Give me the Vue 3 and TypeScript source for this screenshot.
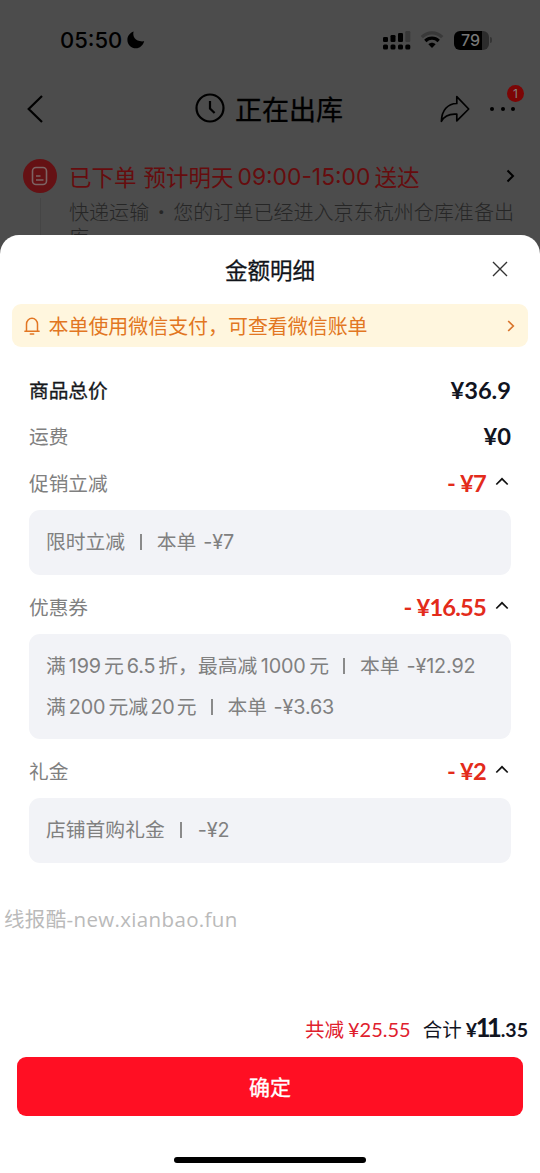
<script setup lang="ts">
interface Part {
  text: string
  kind: 'han' | 'num' | 'bar'
  // space before the part, in pixels
  gap?: number
}

interface Discount {
  label: string
  amount: string
  lines: Part[][]
}

const discounts: Discount[] = [
  {
    label: '促销立减',
    amount: '¥7',
    lines: [
      [
        { text: '限时立减', kind: 'han' },
        { text: '', kind: 'bar', gap: 15 },
        { text: '本单', kind: 'han', gap: 15 },
        { text: '-¥7', kind: 'num', gap: 7 },
      ],
    ],
  },
  {
    label: '优惠券',
    amount: '¥16.55',
    lines: [
      [
        { text: '满', kind: 'han' },
        { text: '199', kind: 'num', gap: 3 },
        { text: '元', kind: 'han', gap: 3 },
        { text: '6.5', kind: 'num', gap: 3 },
        { text: '折，最高减', kind: 'han', gap: 3 },
        { text: '1000', kind: 'num', gap: 3.5 },
        { text: '元', kind: 'han', gap: 3.5 },
        { text: '', kind: 'bar', gap: 14.5 },
        { text: '本单', kind: 'han', gap: 15 },
        { text: '-¥12.92', kind: 'num', gap: 7 },
      ],
      [
        { text: '满', kind: 'han' },
        { text: '200', kind: 'num', gap: 3 },
        { text: '元减', kind: 'han', gap: 3 },
        { text: '20', kind: 'num', gap: 2.5 },
        { text: '元', kind: 'han', gap: 2 },
        { text: '', kind: 'bar', gap: 14.5 },
        { text: '本单', kind: 'han', gap: 15 },
        { text: '-¥3.63', kind: 'num', gap: 6.5 },
      ],
    ],
  },
  {
    label: '礼金',
    amount: '¥2',
    lines: [
      [
        { text: '店铺首购礼金', kind: 'han' },
        { text: '', kind: 'bar', gap: 15.5 },
        { text: '-¥2', kind: 'num', gap: 16 },
      ],
    ],
  },
]
</script>

<template>
  <div class="screen">
    <div class="backdrop">
      <div class="status">
        <span class="clock">05:50</span>
        <svg class="moon" width="18" height="18" viewBox="0 0 18 18">
          <path d="M6.600.600C5.100 5.600 8.800 11.400 17.200 10.300 15.900 14.600 12.800 17.300 9 17.300 4.300 17.300.400 13.600.400 8.900.400 5 3 1.900 6.600.600z" />
        </svg>
        <svg class="signal" width="28" height="19" viewBox="0 0 28 19">
          <g>
            <rect x="0" y="6" width="5" height="5" rx="1.300" />
            <rect x="7.500" y="4" width="5" height="7" rx="1.300" />
            <rect x="15" y="2" width="5" height="9" rx="1.300" />
            <rect x="22.300" y="0" width="5" height="11" rx="1.300" fill="#393939" />
            <rect x="0" y="13.500" width="5" height="5" rx="1.500" />
            <rect x="7.500" y="13.500" width="5" height="5" rx="1.500" />
            <rect x="15" y="13.500" width="5" height="5" rx="1.500" />
            <rect x="22.300" y="13.500" width="5" height="5" rx="1.500" />
          </g>
        </svg>
        <svg class="wifi" width="24" height="18" viewBox="0 0 24 18" fill="none">
          <path d="M1.800 6.200C7.600.4 16.400.4 22.200 6.200" stroke="#393939" stroke-width="3.200" />
          <path d="M5.300 10C9.200 6.200 14.800 6.200 18.700 10" stroke="#000" stroke-width="3.200" />
          <path d="M8.400 13.200C10.500 11.200 13.500 11.200 15.600 13.200L12 17z" fill="#000" />
        </svg>
        <div class="battery"><span>79</span></div>
        <i class="battery-tip"></i>
      </div>

      <div class="nav">
        <svg class="back" width="18" height="30" viewBox="0 0 18 30" fill="none" stroke="#000" stroke-width="2.200">
          <path d="M16 2 2.700 15 16 28" />
        </svg>
        <div class="nav-title">
          <svg width="30" height="30" viewBox="0 0 30 30" fill="none" stroke="#000" stroke-width="2.200">
            <circle cx="15" cy="15" r="13.500" />
            <path d="M15 8V15.500L19.600 20" />
          </svg>
          <span>正在出库</span>
        </div>
        <svg class="share" width="30" height="28" viewBox="0 0 30 28" fill="none" stroke="#000" stroke-width="1.700" stroke-linejoin="round">
          <path d="M16.800 1.700 28.700 14 16.800 25.800V19.200C9.500 18.600 4.500 20.500 1.400 26.300 1.600 15.200 7.800 8.600 16.800 8.500z" />
        </svg>
        <div class="more">
          <i></i><i></i><i></i>
          <b class="badge">1</b>
        </div>
      </div>

      <div class="order">
        <div class="rail">
          <div class="dot">
            <svg width="18" height="20" viewBox="0 0 18 20" fill="none" stroke="#7c6464" stroke-width="1.600">
              <rect x="1.500" y="1.500" width="14" height="17" rx="3.500" />
              <path d="M5 10H9.500M5 14H12.500" />
            </svg>
          </div>
          <div class="track"></div>
        </div>
        <div class="order-body">
          <div class="order-title">
            <span>已下单</span><span class="g1">预计明天</span><em>09:00-15:00</em><span>送达</span>
            <svg width="9" height="14" viewBox="0 0 9 14" fill="none" stroke="#000" stroke-width="2">
              <path d="M1.500 1.500 7 7 1.500 12.500" />
            </svg>
          </div>
          <div class="order-text">快递运输<span class="mid">·</span>您的订单已经进入京东杭州仓库准备出库</div>
        </div>
      </div>
    </div>

    <section class="sheet">
      <header class="sheet-head">
        <h1>金额明细</h1>
        <svg class="close" width="16" height="16" viewBox="0 0 16 16" fill="none" stroke="#333" stroke-width="1.400">
          <path d="M1 1 15 15M15 1 1 15" />
        </svg>
      </header>

      <div class="notice">
        <svg width="16" height="18" viewBox="0 0 16 18" fill="none" stroke="#e27622" stroke-width="1.500" stroke-linecap="round" stroke-linejoin="round">
          <path d="M2.500 14V7A5.500 5.800 0 0 1 13.500 7V14M.9 14.200H15.100M6.300 17H9.700" />
        </svg>
        <span>本单使用微信支付，可查看微信账单</span>
        <svg class="arrow" width="8" height="12" viewBox="0 0 8 12" fill="none" stroke="#d9752c" stroke-width="1.700">
          <path d="M1.200 1 6.300 6 1.200 11" />
        </svg>
      </div>

      <div class="details">
        <div class="row first">
          <span class="label strong">商品总价</span>
          <span class="price">¥36.9</span>
        </div>
        <div class="row">
          <span class="label">运费</span>
          <span class="price">¥0</span>
        </div>
        <template v-for="d in discounts" :key="d.label">
          <div class="row">
            <span class="label">{{ d.label }}</span>
            <span class="price off"><i>-</i>{{ d.amount }}</span>
            <svg class="fold" width="14" height="9" viewBox="0 0 14 9" fill="none" stroke="#111" stroke-width="1.700">
              <path d="M1.300 7.500 7 1.800 12.700 7.500" />
            </svg>
          </div>
          <div class="box">
            <p v-for="(line, n) in d.lines" :key="n">
              <span
                v-for="(part, k) in line"
                :key="k"
                :class="part.kind"
                :style="{ marginLeft: (part.gap ?? 0) + 'px' }"
              >{{ part.text }}</span>
            </p>
          </div>
        </template>
      </div>

      <div class="watermark"><span>线报酷</span>-new.xianbao.fun</div>

      <footer>
        <div class="totals">
          <span class="saved">共减<b>¥25.55</b></span>
          <span class="sum">合计<b>¥<big>11</big>.35</b></span>
        </div>
        <button type="button">确定</button>
        <div class="home"></div>
      </footer>
    </section>
  </div>
</template>

<style>
html,
body {
  margin: 0;
  background: #4c4c4c;
}
</style>

<style scoped>
* {
  box-sizing: border-box;
}
svg {
  display: block;
  flex: none;
}
i,
em {
  font-style: normal;
}
.screen {
  width: 540px;
  height: 1173px;
  overflow: hidden;
  display: flex;
  flex-direction: column;
  background: #4c4c4c;
  font-family: Inter, 'Noto Sans CJK SC', sans-serif;
  white-space: nowrap;
}
.backdrop {
  height: 235px;
  flex: none;
}
.status {
  height: 80px;
  padding-left: 60px;
  display: flex;
  align-items: center;
}
.clock {
  width: 62px;
  font: 500 22px/26px Inter, sans-serif;
}
.moon {
  margin-left: 5px;
}
.signal {
  margin-left: 238px;
}
.wifi {
  margin-left: 9px;
}
.battery {
  margin-left: 10px;
  width: 35px;
  height: 19px;
  border-radius: 6px;
  background: linear-gradient(90deg, #000 28px, #2c2c2c 28px);
  color: #777;
  font: 500 16px/19px Inter, sans-serif;
  padding-left: 7px;
}
.battery-tip {
  width: 2px;
  height: 6px;
  margin-left: 1px;
  border-radius: 0 2px 2px 0;
  background: #343434;
}
.nav {
  height: 58px;
  display: flex;
  align-items: center;
}
.back {
  margin-left: 26px;
}
.nav-title {
  display: flex;
  align-items: center;
  gap: 10px;
  margin-left: 151px;
  width: 245px;
  font: 400 27px/40px 'Noto Sans CJK SC', sans-serif;
  -webkit-text-stroke: 0.3px #000;
}
.nav-title svg {
  margin-bottom: 2px;
}
.more {
  position: relative;
  display: flex;
  gap: 6.500px;
  margin-left: 20px;
}
.more i {
  width: 4px;
  height: 4px;
  border-radius: 50%;
  background: #000;
}
.badge {
  position: absolute;
  left: 17px;
  top: -22px;
  width: 17px;
  height: 17px;
  border-radius: 50%;
  background: #7c0505;
  color: #828282;
  font: 400 12px/17px Inter, sans-serif;
  text-align: center;
}
.order {
  display: flex;
  padding-left: 23px;
  height: 97px;
  overflow: hidden;
}
.rail {
  width: 34px;
  padding-top: 21px;
  display: flex;
  flex-direction: column;
  align-items: center;
}
.dot {
  width: 34px;
  height: 34px;
  flex: none;
  border-radius: 50%;
  background: #651114;
  display: flex;
  align-items: center;
  justify-content: center;
}
.track {
  width: 1px;
  flex: 1;
  margin-top: 5px;
  background: #454545;
}
.order-body {
  padding-left: 12px;
}
.order-title {
  display: flex;
  align-items: center;
  height: 32px;
  margin-top: 22px;
  font: 400 22.500px/32px 'Noto Sans CJK SC', sans-serif;
  color: #660c0e;
}
.order-title > span {
  margin-bottom: 1px;
}
.order-title .g1 {
  margin-left: 7px;
}
.order-title em {
  font: 400 22.800px/32px Inter, sans-serif;
  width: 137px;
  margin-left: 4px;
  padding-top: 1px;
}
.order-title svg {
  margin-left: 86px;
}
.order-text {
  width: 450px;
  margin-top: 7px;
  font: 300 20.060px/25px 'Noto Sans CJK SC', sans-serif;
  color: #262626;
  white-space: normal;
  line-break: anywhere;
}
.mid {
  display: inline-block;
  width: 24px;
  text-align: center;
}
.sheet {
  height: 938px;
  border-radius: 19px 19px 0 0;
  background: #fff;
  display: flex;
  flex-direction: column;
}
.sheet-head {
  height: 69px;
  display: grid;
  grid-template-columns: 1fr auto 1fr;
  align-items: center;
  padding-bottom: 1px;
}
h1 {
  grid-column: 2;
  margin: 0 0 1px;
  font: 400 22.500px/34px 'Noto Sans CJK SC', sans-serif;
  -webkit-text-stroke: 0.3px #11141a;
  color: #11141a;
}
.close {
  justify-self: end;
  margin-right: 32px;
}
.notice {
  height: 43px;
  flex: none;
  margin: 0 12px;
  padding: 0 13px 0 12px;
  border-radius: 9px;
  background: #fff6de;
  display: flex;
  align-items: center;
  font: 400 19.950px/30px 'Noto Sans CJK SC', sans-serif;
  color: #e27622;
}
.notice span {
  margin-left: 8.500px;
}
.arrow {
  margin-left: auto;
}
.details {
  padding: 20px 29px 0;
}
.row {
  height: 47px;
  display: flex;
  align-items: center;
}
.row.first {
  height: 46px;
}
.label {
  margin: 0 auto 1px 0;
  font: 400 19.700px/30px 'Noto Sans CJK SC', sans-serif;
  color: #808080;
}
.label.strong {
  -webkit-text-stroke: 0.3px #16181c;
  color: #16181c;
}
.price {
  margin-bottom: 1px;
  font: 700 23.700px/30px Lato, sans-serif;
  color: #11141f;
}
.off {
  color: #e32b1b;
  letter-spacing: -0.8px;
}
.off i {
  margin-right: 5px;
}
.fold {
  margin: -4px 2px 0 9px;
}
.box {
  margin: 3px 0 9px;
  padding: 11.750px 17px;
  border-radius: 11px;
  background: #f2f3f7;
  color: #808080;
}
.box p {
  margin: 0;
  height: 41px;
  display: flex;
  align-items: center;
}
.han {
  margin-bottom: 2px;
  font: 400 19.800px/30px 'Noto Sans CJK SC', sans-serif;
}
.num {
  font: 400 19.800px/30px Inter, sans-serif;
  letter-spacing: -0.15px;
}
.bar {
  width: 1.500px;
  height: 16px;
  background: #8a8a8a;
}
.watermark {
  margin: 31px 0 0 4px;
  font: 500 20.500px/30px 'Open Sans', sans-serif;
  letter-spacing: 0.35px;
  color: #bababa;
}
.watermark span {
  font-family: 'Noto Sans CJK SC', sans-serif;
  font-weight: 400;
}
footer {
  margin-top: auto;
}
.totals {
  display: flex;
  justify-content: flex-end;
  align-items: baseline;
  padding-right: 12px;
  height: 47px;
  font: 400 19.500px/34px 'Noto Sans CJK SC', sans-serif;
  color: #11141f;
}
.saved {
  color: #e0202d;
  margin-right: 12px;
}
.saved b {
  font: 400 20px/34px Lato, sans-serif;
  margin-left: 4px;
}
.sum b {
  font: 700 19.500px/34px Lato, sans-serif;
  margin-left: 4px;
}
big {
  font-size: 26px;
  letter-spacing: -4px;
  margin: 0 3px 0 -1.500px;
}
button {
  display: block;
  width: 506px;
  height: 59px;
  margin: 0 auto;
  padding: 0 0 1px;
  border: 0;
  border-radius: 9px;
  background: #ff0f23;
  color: #fff;
  font: 400 21px/57px 'Noto Sans CJK SC', sans-serif;
  -webkit-text-stroke: 0.3px #fff;
}
.home {
  width: 192px;
  height: 6px;
  margin: 41px auto 10px;
  border-radius: 3px;
  background: #000;
}
</style>
